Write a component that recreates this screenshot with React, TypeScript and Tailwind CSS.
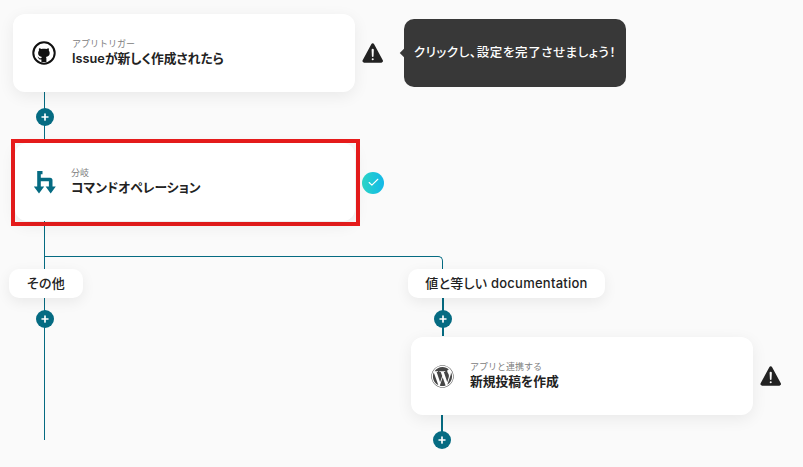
import React from "react";
import { Check, Plus } from "lucide-react";
import { FaWordpress } from "react-icons/fa";
import { IoWarning } from "react-icons/io5";

const GithubIcon = () => (
  <svg viewBox="0 0 24 24" className="h-[24px] w-[24px]">
    <circle cx="12" cy="12" r="10.7" fill="#fff" stroke="#111" strokeWidth="2" />
    <path
      fill="#111"
      d="M9.4 21v-2.600c-2 .4-2.700-.6-3-1.500-.2-.5-.6-.9-1-1.100.6-.2 1.200.1 1.700.9.500.7 1.300.8 2.300.4 0-.5.200-.9.500-1.200-2.300-.3-3.800-1.400-3.800-4 0-1 .3-1.800.9-2.500-.2-.7-.2-1.500.1-2.200.8 0 1.600.3 2.300.9 1.700-.4 3.300-.4 5 0 .7-.6 1.500-.9 2.300-.9.300.7.300 1.500.1 2.200.6.700.9 1.500.9 2.500 0 2.600-1.500 3.700-3.800 4 .4.400.5.900.5 1.500V21z"
    />
  </svg>
);

const BranchIcon = () => (
  <svg viewBox="0 0 22 23" className="h-[23px] w-[22px]" fill="#056b82">
    <path d="M3.200 0H8.500V3.200H6.800V6.800H16a2.500 2.500 0 0 1 2.500 2.500V15.500H21.800L16.700 22.500L11.600 15.500H14.900V10.200H6.800V15.500H10.200L5 22.500L-.2 15.500H3.200Z" />
  </svg>
);

const AddButton = () => (
  <div className="flex h-[18px] w-[18px] shrink-0 items-center justify-center rounded-full bg-[#056b82]">
    <Plus className="h-[10px] w-[10px] text-white" strokeWidth={4} />
  </div>
);

const Warning = () => <IoWarning className="h-[26px] w-[26px] shrink-0 text-[#222222]" />;

const StepCard = ({
  icon,
  label,
  title,
  className = "h-[78px] w-[342px]",
  iconWidth = "w-[59px]",
}: {
  icon: React.ReactNode;
  label: string;
  title: string;
  className?: string;
  iconWidth?: string;
}) => (
  <div className={`flex shrink-0 items-center rounded-[12px] bg-white shadow-[0_4px_16px_rgba(0,0,0,0.07)] ${className}`}>
    <div className={`flex shrink-0 justify-center pl-[3px] ${iconWidth}`}>{icon}</div>
    <div className="flex flex-col">
      <span className="text-[9px] leading-[12px] text-[#808080]">{label}</span>
      <span className="text-[12.75px] leading-[18px] font-semibold text-[#222222] [font-feature-settings:'palt']">{title}</span>
    </div>
  </div>
);

const BranchPill = ({ width, text }: { width: string; text: string }) => (
  <div className={`flex h-[29px] items-center justify-center rounded-[10px] bg-white text-[13px] font-medium tracking-[0.25px] text-[#222222] shadow-[0_4px_14px_rgba(0,0,0,0.07)] [font-feature-settings:'palt'] ${width}`}>
    {text}
  </div>
);

export default function App() {
  return (
    <div className="relative flex h-[467px] w-[803px] flex-col overflow-hidden bg-[#fafafa] pt-[14px] font-['Inter','Noto_Sans_CJK_JP',sans-serif]">
      {/* edges of the flow */}
      <div className="absolute left-[44px] top-[92px] h-[52px] w-px bg-[#056b82]" />
      <div className="absolute left-[44px] top-[220px] h-[220px] w-px bg-[#056b82]" />
      <div className="absolute left-[44px] top-[256px] h-[14px] w-[399px] rounded-tr-[5px] border-t border-r border-[#056b82]" />
      <div className="absolute left-[442px] top-[298px] h-[38px] w-[2px] bg-[#056b82]" />
      <div className="absolute left-[441px] top-[415px] h-[26px] w-[2px] bg-[#056b82]" />

      {/* trigger row */}
      <div className="relative flex items-center gap-[5px] pl-[13px]">
        <StepCard
          icon={<GithubIcon />}
          label="アプリトリガー"
          title="Issueが新しく作成されたら"
        />
        <Warning />
        <div className="relative ml-[13px] flex h-[68px] w-[222px] items-center justify-center rounded-[10px] bg-[#383838] text-[12.5px] font-medium tracking-[0.6px] text-white [font-feature-settings:'palt']">
          クリックし、設定を完了させましょう！
          <div className="absolute left-[-3px] top-1/2 h-[6px] w-[6px] -translate-y-1/2 rotate-45 bg-[#383838]" />
        </div>
      </div>

      <div className="relative flex h-[47px] items-center pl-[36px] pt-[3px]">
        <AddButton />
      </div>

      {/* highlighted branch step */}
      <div className="relative flex items-center gap-[2px] pl-[11px]">
        <div className="h-[87px] w-[349px] border-4 border-[#e81c1c]">
          <StepCard
            className="h-[78px] w-[340px]"
            iconWidth="w-[56px]"
            icon={<BranchIcon />}
            label="分岐"
            title="コマンドオペレーション"
          />
        </div>
        <div className="flex h-[22px] w-[22px] items-center justify-center rounded-full bg-gradient-to-r from-[#2bd4c4] to-[#14b8e8]">
          <Check className="h-[13px] w-[13px] text-white" strokeWidth={2} />
        </div>
      </div>

      {/* branches */}
      <div className="relative flex pt-[43px]">
        <div className="flex w-[408px] shrink-0 flex-col items-start pl-[9px]">
          <BranchPill width="w-[74px]" text="その他" />
          <div className="ml-[27px] mt-[12px]">
            <AddButton />
          </div>
        </div>
        <div className="flex flex-col items-start">
          <BranchPill width="w-[197px]" text="値と等しい documentation" />
          <div className="ml-[26px] mt-[12px]">
            <AddButton />
          </div>
          <div className="ml-[3px] mt-[9px] flex items-center gap-[5px]">
            <StepCard
              icon={<FaWordpress className="h-[23px] w-[23px] text-[#464646]" />}
              label="アプリと連携する"
              title="新規投稿を作成"
            />
            <Warning />
          </div>
          <div className="ml-[25px] mt-[16px]">
            <AddButton />
          </div>
        </div>
      </div>
    </div>
  );
}
